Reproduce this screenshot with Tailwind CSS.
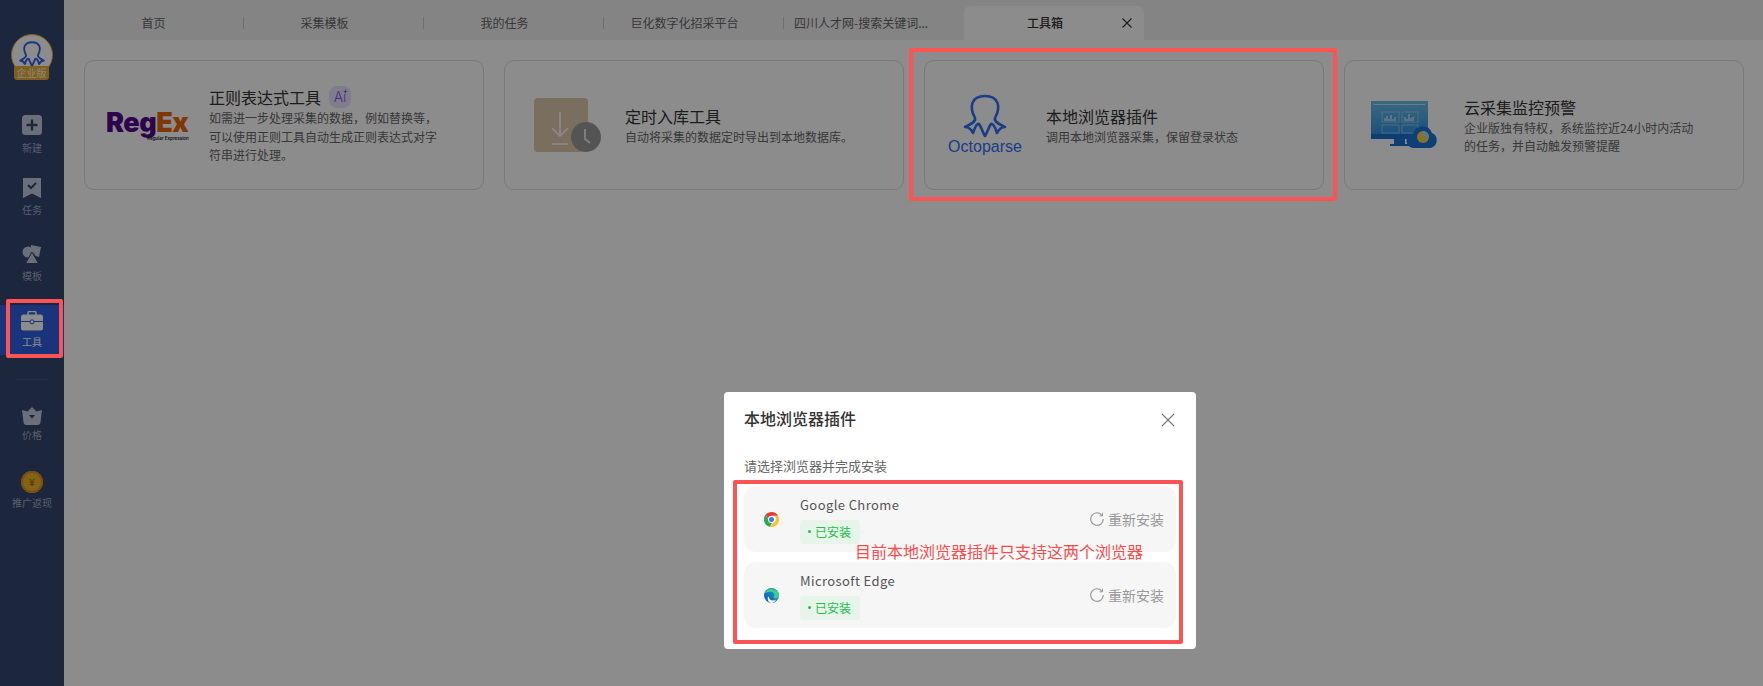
<!DOCTYPE html>
<html lang="zh">
<head>
    <meta charset="UTF-8">
    <title>工具箱</title>
    <script src="https://cdn.jsdelivr.net/npm/@tailwindcss/browser@4"></script>
</head>
<body class="relative h-[686px] w-[1763px] overflow-hidden bg-white font-['Noto_Sans_CJK_SC',sans-serif] text-[#333]">

<div class="flex h-full">
    <!-- 左侧导航 -->
    <aside class="flex w-16 shrink-0 flex-col items-center bg-[#33456f] text-[10px] leading-[14px] text-[#a2abc2]">
        <div class="relative mt-[34px] h-[46px] w-[42px]">
            <div class="flex h-[42px] w-[42px] items-start justify-center rounded-full border border-[#e5ae3a] bg-white pt-[6px]">
                <svg viewBox="0 0 44 44" class="h-[26px] w-[26px]" fill="none" stroke="#2f62ea" stroke-width="3.200" stroke-linejoin="round"><path d="M12 24 C6 13 8 2 22 2 C36 2 38 13 32 24 C31 28 36 30 42 33 C38 33 36 35 34 39 C32 33 30 29 28 30 C26 32 25 37 22 42 C19 37 18 32 16 30 C14 29 12 33 10 39 C8 35 6 33 2 33 C8 30 13 28 12 24 Z"/></svg>
            </div>
            <div class="absolute bottom-0 left-[3px] h-[14px] w-[35px] rounded-b-[3px] rounded-t-[1px] bg-[#e5ae3a] text-center text-[10px] leading-[14px] text-[#fff6dc]">企业版</div>
        </div>

        <a class="mt-[27px] flex h-[50px] w-full flex-col items-center justify-end pb-[2px]">
            <svg viewBox="0 0 20 20" class="h-5 w-5"><rect width="20" height="20" rx="3.500" fill="#c3cbdc"/><path d="M10 4.500v11M4.500 10h11" stroke="#33456f" stroke-width="2.400"/></svg>
            <span class="mt-[6px]">新建</span>
        </a>
        <a class="mt-[16px] flex h-[50px] w-full flex-col items-center justify-end pb-[6px]">
            <svg viewBox="0 0 18 20" class="h-5 w-[18px]"><path d="M0 0h18v20l-9-4.600L0 20z" fill="#c3cbdc"/><path d="M5 7l3 3 5-5" fill="none" stroke="#33456f" stroke-width="2"/></svg>
            <span class="mt-[5px]">任务</span>
        </a>
        <a class="mt-[16px] flex h-[50px] w-full flex-col items-center justify-end pb-[6px]">
            <svg viewBox="0 0 20 20" class="h-5 w-5"><path d="M9 1l10 2-2 10-3.500-1L9 5z" fill="#c3cbdc"/><circle cx="6" cy="8" r="5.500" fill="#c3cbdc"/><path d="M10 8l6.500 11.500H3.500z" fill="#c3cbdc" stroke="#33456f" stroke-width="1"/></svg>
            <span class="mt-[5px]">模板</span>
        </a>
        <a class="mt-[16px] flex h-[50px] w-full flex-col items-center justify-end bg-[#2f5fe0] pb-[6px] text-white">
            <svg viewBox="0 0 22 20" class="h-5 w-[22px]"><path d="M7 4V2a1.500 1.500 0 0 1 1.500-1.500h5A1.500 1.500 0 0 1 15 2v2" fill="none" stroke="#fff" stroke-width="1.500"/><rect y="3.500" width="22" height="16" rx="2.500" fill="#fff"/><path d="M0 10.500h22" stroke="#2f5fe0" stroke-width="1"/><circle cx="11" cy="10.800" r="2" fill="#fff" stroke="#2f5fe0" stroke-width="1"/></svg>
            <span class="mt-[4px]">工具</span>
        </a>

        <div class="mt-[24px] h-px w-8 bg-[#44557f]"></div>

        <a class="mt-[27px] flex h-[40px] w-full flex-col items-center">
            <svg viewBox="0 0 20 18" class="h-[18px] w-5"><path d="M10 0l4.500 4.500L20 3l-1.500 12a3 3 0 0 1-3 3h-11a3 3 0 0 1-3-3L0 3l5.500 1.500z" fill="#c3cbdc"/><path d="M7 8l3 3.500L13 8z" fill="#33456f"/></svg>
            <span class="mt-[3px]">价格</span>
        </a>
        <a class="mt-[24px] flex w-full flex-col items-center">
            <div class="flex h-[22px] w-[22px] items-center justify-center rounded-full bg-[#f0b429] text-[10px] font-bold leading-none text-[#a86d10] ring-2 ring-inset ring-[#d9921a]">¥</div>
            <span class="mt-[3px]">推广返现</span>
        </a>
    </aside>

    <main class="flex min-w-0 flex-1 flex-col">
        <!-- 标签栏 -->
        <div class="flex h-10 items-end bg-[#f0f0f0] text-xs text-[#666]">
            <div class="flex h-[34px] w-[180px] items-center"><span class="flex h-[12px] w-full items-center justify-center border-r border-[#c8c8c8]">首页</span></div>
            <div class="flex h-[34px] w-[180px] items-center"><span class="flex h-[12px] w-full items-center justify-center border-r border-[#c8c8c8] pr-[18px]">采集模板</span></div>
            <div class="flex h-[34px] w-[180px] items-center"><span class="flex h-[12px] w-full items-center justify-center border-r border-[#c8c8c8] pr-[18px]">我的任务</span></div>
            <div class="flex h-[34px] w-[180px] items-center"><span class="flex h-[12px] w-full items-center justify-center border-r border-[#c8c8c8] pr-[18px]">巨化数字化招采平台</span></div>
            <div class="flex h-[34px] w-[180px] items-center pl-[10px]"><span>四川人才网-搜索关键词...</span></div>
            <div class="relative flex h-[34px] w-[180px] items-center justify-center rounded-t-[6px] bg-white pr-[18px] font-medium text-[#333]">
                工具箱
                <svg viewBox="0 0 10 10" class="absolute right-[12px] top-[12px] h-[10px] w-[10px]" fill="none" stroke="#333" stroke-width="1.100"><path d="M.5.500l9 9M9.500.500l-9 9"/></svg>
            </div>
        </div>

        <!-- 工具卡片 -->
        <div class="flex gap-5 pl-5 pt-5">
            <div class="flex h-[130px] w-[400px] items-center rounded-[10px] border border-[#dcdcdc] pl-[21px]">
                <div class="w-[103px] shrink-0 font-['Inter',sans-serif]">
                    <div class="text-[27px] font-black leading-[30px] tracking-[-0.5px]"><span class="text-[#54078f]">Reg</span><span class="text-[#e8640a]">Ex</span></div>
                    <div class="mt-[-2px] pl-[41px] text-[4.500px] font-semibold leading-[6px] text-[#222]">Regular Expression</div>
                </div>
                <div class="w-[235px]">
                    <div class="flex items-center text-base leading-[24px]">正则表达式工具
                        <span class="relative ml-2 flex h-[22px] w-[22px] items-center justify-center rounded-[8px] bg-[#e6e4fa] font-['Inter',sans-serif] text-sm font-light leading-none text-[#8a4ff5]">Ai<svg viewBox="0 0 6 6" class="absolute right-[3px] top-[3px] h-[5px] w-[5px]"><path d="M3 0l.7 2.300L6 3l-2.300.7L3 6l-.7-2.300L0 3l2.300-.7z" fill="#8a4ff5"/></svg></span>
                    </div>
                    <p class="text-xs leading-[18.500px] text-[#666]">如需进一步处理采集的数据，例如替换等，可以使用正则工具自动生成正则表达式对字符串进行处理。</p>
                </div>
            </div>

            <div class="flex h-[130px] w-[400px] items-center rounded-[10px] border border-[#dcdcdc] pl-[29px]">
                <div class="relative mr-[37px] h-[54px] w-[54px] shrink-0 rounded-[4px] bg-[#dfcaad]">
                    <svg viewBox="0 0 54 54" class="h-[54px] w-[54px]" fill="none" stroke="#fff" stroke-width="1.500"><path d="M27 15v24M19 31l8 8 8-8M19 47h16" transform="translate(-1,-1)"/></svg>
                    <div class="absolute left-[37px] top-[24px] h-[30px] w-[30px] rounded-full bg-[#9a9a9a]">
                        <svg viewBox="0 0 30 30" class="h-[30px] w-[30px]" fill="none" stroke="#e6e6e6" stroke-width="2"><path d="M14 7v10l5 4"/></svg>
                    </div>
                </div>
                <div>
                    <div class="text-base leading-[24px]">定时入库工具</div>
                    <p class="text-xs leading-[18.500px] text-[#666]">自动将采集的数据定时导出到本地数据库。</p>
                </div>
            </div>

            <div class="flex h-[130px] w-[400px] items-center rounded-[10px] border border-[#dcdcdc] pl-[23px]">
                <div class="mr-[24px] flex w-[74px] shrink-0 flex-col items-center">
                    <svg viewBox="0 0 44 44" class="h-[44px] w-[44px]" fill="none" stroke="#2f6ff5" stroke-width="2.600" stroke-linejoin="round"><path d="M12 24 C6 13 8 2 22 2 C36 2 38 13 32 24 C31 28 36 30 42 33 C38 33 36 35 34 39 C32 33 30 29 28 30 C26 32 25 37 22 42 C19 37 18 32 16 30 C14 29 12 33 10 39 C8 35 6 33 2 33 C8 30 13 28 12 24 Z"/></svg>
                    <span class="font-['Liberation_Sans',sans-serif] text-base leading-[18px] text-[#2f6ff5]">Octoparse</span>
                </div>
                <div>
                    <div class="text-base leading-[24px]">本地浏览器插件</div>
                    <p class="text-xs leading-[18.500px] text-[#666]">调用本地浏览器采集，保留登录状态</p>
                </div>
            </div>

            <div class="flex h-[130px] w-[400px] items-center rounded-[10px] border border-[#dcdcdc] pl-[26px]">
                <svg viewBox="0 0 67 48" class="mr-[26px] h-[48px] w-[67px] shrink-0">
                    <defs>
                        <linearGradient id="screen" x1="0" y1="0" x2="0" y2="1"><stop offset="0" stop-color="#6cbfe8"/><stop offset="1" stop-color="#2a8ce0"/></linearGradient>
                    </defs>
                    <rect x="0" y="0" width="57" height="38" fill="url(#screen)"/>
                    <rect x="0" y="33" width="57" height="5" fill="#1a6fd0"/>
                    <path d="M23 38h11v5h5v2H19v-2h4z" fill="#1a6fd0"/>
                    <path d="M3 3.500h51" stroke="#d5effc" stroke-width=".8"/>
                    <g fill="none" stroke="#c8e9fa" stroke-width=".5">
                        <rect x="11" y="11" width="17" height="10"/><rect x="31" y="11" width="16" height="10"/><rect x="11" y="24" width="17" height="8"/><rect x="31" y="24" width="16" height="8"/>
                    </g>
                    <path d="M13 20v-3h2v-2h2v3h2v-4h2v4h2v-2h2v4zM33 20v-4h2v2h2v-5h2v4h2v-1h2v4z" fill="#d8f0fc" fill-opacity=".6"/>
                    <path d="M43 47a7 7 0 0 1-1-14 10 10 0 0 1 19-1 8 8 0 0 1-1 15z" fill="#1b76d8" stroke="#fff" stroke-width=".0"/>
                    <circle cx="52" cy="36" r="6" fill="#f5cf4a"/><path d="M52 36v-6a6 6 0 0 1 6 6z" fill="#a9dcf5"/>
                </svg>
                <div class="w-[235px]">
                    <div class="text-base leading-[24px]">云采集监控预警</div>
                    <p class="text-xs leading-[18.500px] text-[#666]">企业版独有特权，系统监控近24小时内活动的任务，并自动触发预警提醒</p>
                </div>
            </div>
        </div>
    </main>
</div>

<!-- 遮罩 -->
<div class="absolute inset-0 bg-black/45"></div>

<!-- 弹窗 -->
<div class="absolute left-[724px] top-[392px] h-[257px] w-[472px] rounded-[4px] bg-white px-5 pt-[15px]">
    <div class="flex h-[22px] items-center justify-between">
        <h2 class="text-base font-medium leading-[22px] text-[#333]">本地浏览器插件</h2>
        <svg viewBox="0 0 14 14" class="mr-[1px] mt-[4px] h-[14px] w-[14px]" fill="none" stroke="#777" stroke-width="1.100"><path d="M1 1l12 12M13 1L1 13"/></svg>
    </div>
    <p class="mt-[27px] text-[13px] leading-5 text-[#666]">请选择浏览器并完成安装</p>

    <div class="mt-[10px] flex h-[66px] items-center rounded-xl bg-[#f6f6f6] pl-5 pr-[12px]">
        <svg viewBox="0 0 16 16" class="h-[15px] w-[15px] shrink-0">
            <path d="M8 0a8 8 0 0 1 7 4H8a4 4 0 0 0-3.800 2.800L1.600 3A8 8 0 0 1 8 0z" fill="#e33b2e"/>
            <path d="M1.600 3L5 8.800a4 4 0 0 0 3.500 3.200L6.300 15.800A8 8 0 0 1 1.600 3z" fill="#2fa84f"/>
            <path d="M15 4a8 8 0 0 1-8.700 11.800L10.500 11A4 4 0 0 0 11 4z" fill="#fbc02d"/>
            <circle cx="8" cy="8" r="3.600" fill="#fff"/><circle cx="8" cy="8" r="2.700" fill="#3c7be0"/>
        </svg>
        <div class="ml-[21px]">
            <div class="text-[13px] leading-[19px] tracking-[0.4px] text-[#555]">Google Chrome</div>
            <div class="mt-[6px] flex h-6 w-[60px] items-center rounded-[4px] bg-[#e6f4ea] pl-2 text-xs text-[#1ebf4e]"><span class="mr-1 h-[3px] w-[3px] rounded-full bg-[#1ebf4e]"></span>已安装</div>
        </div>
        <div class="ml-auto flex items-center text-sm text-[#999]">
            <svg viewBox="0 0 14 14" class="mr-[4px] h-[14px] w-[14px]" fill="none" stroke="#999" stroke-width="1.200"><path d="M12.200 3.500A6.300 6.300 0 1 0 13.300 7"/><path d="M12.500 .800v3h-3" stroke-width="1"/></svg>
            重新安装
        </div>
    </div>

    <div class="mt-[10px] flex h-[66px] items-center rounded-xl bg-[#f6f6f6] pl-5 pr-[12px]">
        <svg viewBox="0 0 16 16" class="h-[15px] w-[15px] shrink-0">
            <defs>
                <linearGradient id="edge" x1="0" y1="1" x2="1" y2="0"><stop offset="0" stop-color="#0c59a4"/><stop offset="1" stop-color="#1ba1e2"/></linearGradient>
            </defs>
            <circle cx="8" cy="8" r="8" fill="url(#edge)"/>
            <path d="M1 5.500A8 8 0 0 1 16 8c0 2-1.500 3.200-3.500 3.200-1.300 0-2.300-.6-2.300-1.500 0-.8.9-1 .9-2.200C11.100 5.800 9.500 4 7 4 4.500 4 2.300 4.800 1 5.500z" fill="#3fd08a"/>
            <path d="M5 9c0 2.500 2 4.300 4.500 4.300 1.200 0 2.400-.4 3.500-1-1 2-3 3.700-5.500 3.700C5.500 16 3.700 13 4 10.500 4.100 9.800 4.500 9 5 9z" fill="#fff"/>
        </svg>
        <div class="ml-[21px]">
            <div class="text-[13px] leading-[19px] tracking-[0.4px] text-[#555]">Microsoft Edge</div>
            <div class="mt-[6px] flex h-6 w-[60px] items-center rounded-[4px] bg-[#e6f4ea] pl-2 text-xs text-[#1ebf4e]"><span class="mr-1 h-[3px] w-[3px] rounded-full bg-[#1ebf4e]"></span>已安装</div>
        </div>
        <div class="ml-auto flex items-center text-sm text-[#999]">
            <svg viewBox="0 0 14 14" class="mr-[4px] h-[14px] w-[14px]" fill="none" stroke="#999" stroke-width="1.200"><path d="M12.200 3.500A6.300 6.300 0 1 0 13.300 7"/><path d="M12.500 .800v3h-3" stroke-width="1"/></svg>
            重新安装
        </div>
    </div>
</div>

<!-- 标注框 -->
<div class="absolute left-[6px] top-[299px] h-[59px] w-[57px] rounded-[2px] border-4 border-[#fc5454]"></div>
<div class="absolute left-[909px] top-[48px] h-[153px] w-[428px] rounded-[2px] border-4 border-[#fc5454]"></div>
<div class="absolute left-[733px] top-[480px] h-[164px] w-[450px] rounded-[2px] border-4 border-[#fc5454]"></div>
<div class="absolute left-[855px] top-[540px] text-base leading-[22px] text-[#fc4a4a]">目前本地浏览器插件只支持这两个浏览器</div>

</body>
</html>
